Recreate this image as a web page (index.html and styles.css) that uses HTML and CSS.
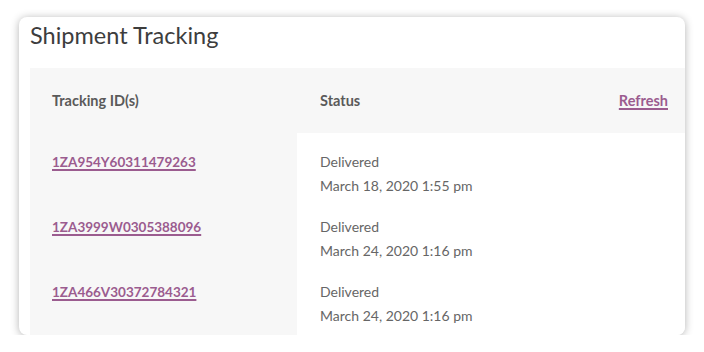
FILE: index.html
```html
<!DOCTYPE html>
<html lang="en">
<head>
<meta charset="utf-8">
<title>Shipment Tracking</title>
<link rel="stylesheet" href="styles.css">
</head>
<body>
<div class="card">
  <h2 class="title">Shipment Tracking</h2>
  <table class="tracking">
    <thead>
      <tr>
        <th class="col-id">Tracking ID(s)</th>
        <th class="col-status">
          <div class="status-head"><span>Status</span><a href="#" class="link refresh">Refresh</a></div>
        </th>
      </tr>
    </thead>
    <tbody>
      <tr>
        <td class="col-id"><a href="#" class="link">1ZA954Y60311479263</a></td>
        <td class="col-status">Delivered<br>March 18, 2020 1:55 pm</td>
      </tr>
      <tr>
        <td class="col-id"><a href="#" class="link">1ZA3999W0305388096</a></td>
        <td class="col-status">Delivered<br>March 24, 2020 1:16 pm</td>
      </tr>
      <tr class="last">
        <td class="col-id"><a href="#" class="link">1ZA466V30372784321</a></td>
        <td class="col-status">Delivered<br>March 24, 2020 1:16 pm</td>
      </tr>
    </tbody>
  </table>
</div>
</body>
</html>
```

FILE: styles.css
```css
html, body {
  margin: 0;
  padding: 0;
  background: #ffffff;
}
body {
  padding: 17px 19px 0 19px;
  font-family: Lato, "Open Sans", "Liberation Sans", sans-serif;
}
.card {
  width: 666px;
  height: 318px;
  box-sizing: border-box;
  background: #ffffff;
  border-radius: 8px;
  box-shadow: 0 1px 9px rgba(0, 0, 0, 0.3);
  overflow: hidden;
  padding-left: 11px;
}
.title {
  margin: 0;
  height: 51px;
  padding-top: 2px;
  box-sizing: border-box;
  font-size: 23.5px;
  font-weight: 400;
  line-height: 32px;
  color: #3d3d3d;
}
.tracking {
  width: 100%;
  border-collapse: collapse;
  border-spacing: 0;
}
.tracking th {
  height: 65px;
  padding: 0;
  background: #f7f7f7;
  font-size: 14.5px;
  font-weight: 700;
  color: #5a5a5a;
  text-align: left;
  vertical-align: middle;
}
.col-id {
  width: 267px;
  padding-left: 22px !important;
  box-sizing: border-box;
}
.col-status {
  padding-left: 23px !important;
}
.status-head {
  display: flex;
  justify-content: space-between;
  align-items: center;
  padding-right: 17px;
}
.tracking td {
  padding: 17px 0 0 0;
  height: 48px;
  font-size: 14px;
  line-height: 24px;
  color: #666666;
  vertical-align: top;
}
.tracking tr.last td {
  height: 56px;
}
.tracking td.col-id {
  background: #f7f7f7;
}
.tracking td.col-status {
  background: #ffffff;
}
.link {
  color: #9b5c8f;
  font-size: 13.5px;
  font-weight: 700;
  text-decoration: underline;
  text-decoration-thickness: 1.5px;
  text-underline-offset: 2px;
}
.refresh {
  font-size: 14.5px;
}
```
